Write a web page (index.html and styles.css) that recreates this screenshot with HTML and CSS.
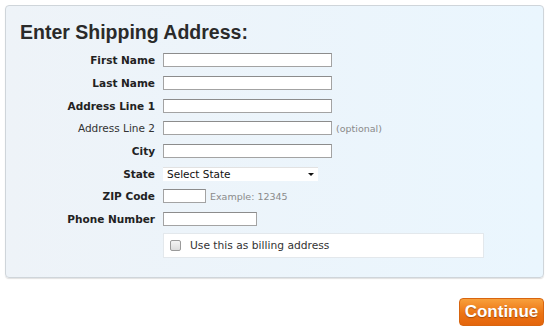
FILE: index.html
```html
<!DOCTYPE html>
<html lang="en">
<head>
  <meta charset="UTF-8">
  <title>Shipping Address</title>
  <link rel="stylesheet" href="styles.css">
</head>
<body>
<div class="panel">
  <h1>Enter Shipping Address:</h1>
  <div class="form">
    <div class="row">
      <label class="req">First Name</label>
      <input class="field" type="text">
    </div>
    <div class="row">
      <label class="req">Last Name</label>
      <input class="field" type="text">
    </div>
    <div class="row">
      <label class="req">Address Line 1</label>
      <input class="field" type="text">
    </div>
    <div class="row">
      <label>Address Line 2</label>
      <input class="field" type="text">
      <span class="hint">(optional)</span>
    </div>
    <div class="row">
      <label class="req">City</label>
      <input class="field" type="text">
    </div>
    <div class="row">
      <label class="req">State</label>
      <div class="select">Select State<span class="arrow"></span></div>
    </div>
    <div class="row">
      <label class="req">ZIP Code</label>
      <input class="field zip" type="text">
      <span class="hint">Example: 12345</span>
    </div>
    <div class="row">
      <label class="req">Phone Number</label>
      <input class="field phone" type="text">
    </div>
  </div>
  <div class="billing">
    <span class="check"></span>
    <span>Use this as billing address</span>
  </div>
</div>
<div class="actions">
  <button class="continue">Continue</button>
</div>
</body>
</html>
```

FILE: styles.css
```css
body {
  margin: 0;
  font-family: "DejaVu Sans", Verdana, sans-serif;
  color: #222;
  background: #fff;
}
.panel {
  margin: 5px 6px 0 5px;
  height: 271px;
  padding: 0 14px;
  border: 1px solid #cfd5da;
  border-radius: 4px;
  background: linear-gradient(90deg, #eef3f8, #eaf6fe);
  box-shadow: 0 1px 1px rgba(0, 0, 0, 0.12);
}
h1 {
  margin: 0;
  padding: 15px 0 0;
  height: 28px;
  font-family: "Liberation Sans", Arial, sans-serif;
  font-size: 19.5px;
  font-weight: bold;
  color: #2a2a2a;
}
.form {
  display: flex;
  flex-direction: column;
}
.row {
  display: flex;
  align-items: center;
  height: 22.7px;
}
.row label {
  width: 135px;
  margin-right: 8px;
  text-align: right;
  font-size: 10.5px;
  color: #333;
}
.row label.req {
  font-weight: bold;
  color: #222;
}
.field {
  box-sizing: border-box;
  width: 169px;
  height: 14px;
  margin: 0;
  padding: 0;
  border: 1px solid #a3a3a3;
  border-top-color: #8c8c8c;
  background: #fff;
}
.field.zip {
  width: 43px;
}
.field.phone {
  width: 94px;
}
.hint {
  margin-left: 4px;
  font-size: 9.5px;
  color: #8a8a8a;
}
.select {
  position: relative;
  box-sizing: border-box;
  width: 155px;
  height: 14px;
  padding-left: 4px;
  background: #fff;
  border-top: 1px solid #e2e2e2;
  font-size: 10.5px;
  line-height: 12px;
  color: #111;
}
.arrow {
  position: absolute;
  right: 4px;
  top: 5px;
  border-left: 3px solid transparent;
  border-right: 3px solid transparent;
  border-top: 3px solid #111;
}
.billing {
  display: flex;
  align-items: center;
  box-sizing: border-box;
  width: 321px;
  height: 25px;
  margin: 2px 0 0 143px;
  padding-left: 6px;
  background: #fff;
  border: 1px solid #e3e8ec;
  font-size: 10.7px;
  color: #333;
}
.check {
  box-sizing: border-box;
  width: 11px;
  height: 11px;
  margin-right: 9px;
  border: 1px solid #9a9a9a;
  border-radius: 2px;
  background: linear-gradient(#f4f4f4, #dcdcdc);
}
.actions {
  display: flex;
  justify-content: flex-end;
  padding: 20px 6px 0 0;
}
.continue {
  width: 85px;
  height: 28px;
  padding: 0;
  border: 1px solid #d8650f;
  border-radius: 4px;
  background: linear-gradient(#f8a03c, #ec7414 55%, #e4650c);
  color: #fff;
  font-family: "Liberation Sans", Arial, sans-serif;
  font-size: 17px;
  font-weight: bold;
  text-shadow: 0 1px 1px rgba(120, 50, 0, 0.6);
  cursor: pointer;
}
```
